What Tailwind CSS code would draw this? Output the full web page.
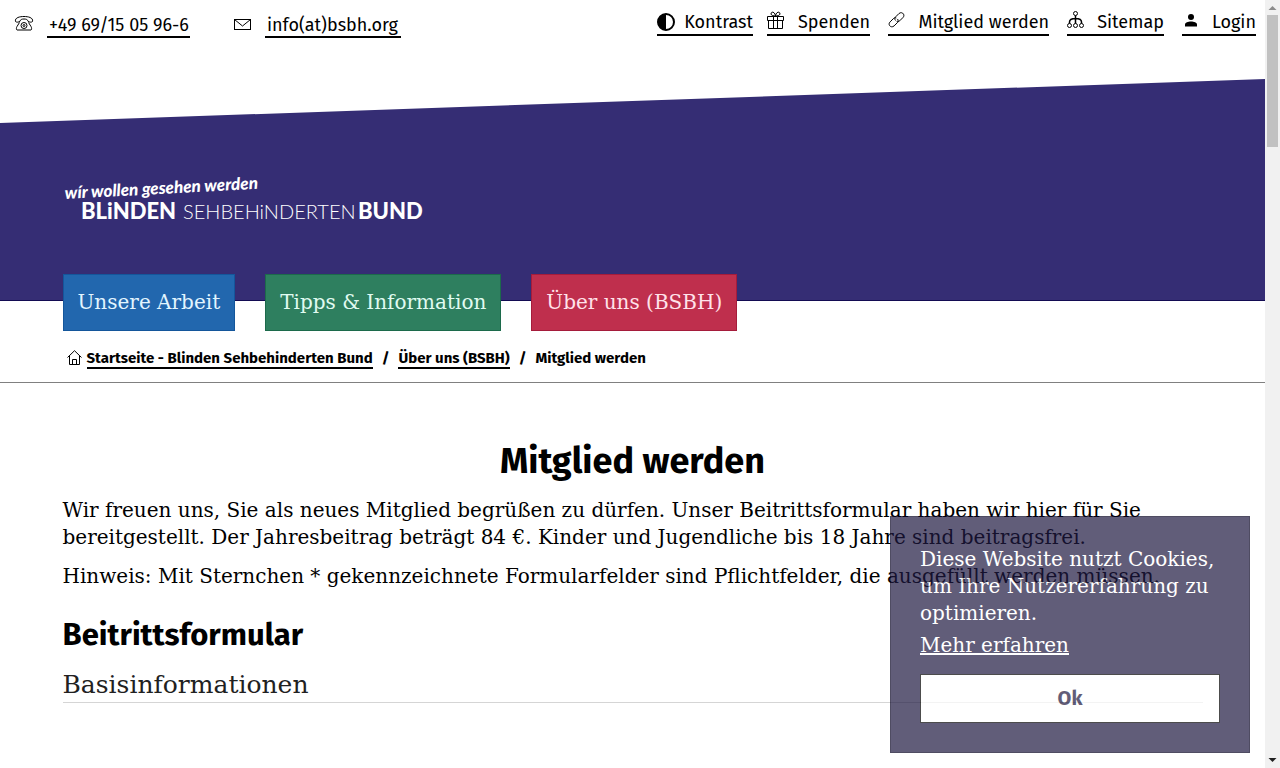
<!DOCTYPE html>
<html lang="de">

<head>
  <meta charset="UTF-8" />
  <meta name="viewport" content="width=device-width, initial-scale=1.0" />
  <title>Mitglied werden - Blinden Sehbehinderten Bund</title>
  <script src="https://cdn.jsdelivr.net/npm/@tailwindcss/browser@4"></script>
</head>

<body class="h-screen overflow-hidden bg-white text-black font-['DejaVu_Serif',serif] text-[20px] leading-[27px]">
  <div class="pr-[15px]">

    <!-- Top bar -->
    <div class="h-[79px] flex justify-between items-start pl-[14px] pr-[9px] font-['Fira_Sans','Noto_Sans',sans-serif] text-[18px] leading-[24px]">
      <address class="not-italic flex pt-[14px] gap-[42px] leading-[22px]">
        <div class="flex gap-[13px]">
          <svg class="w-5 h-5" viewBox="0 0 20 20" fill="none" stroke="#000">
            <path d="M1.500 7.500C.5 3.500 6 2.500 10 2.500s9.500 1 8.500 5c-1 1-3.500.8-4.500-.2C13.800 5.500 12 5 10 5S6.200 5.500 6 7.300C5 8.300 2.500 8.500 1.500 7.500z" />
            <path d="M5.500 8.500 3 12.500c-.8 1-.8 3.500 0 3.500h14c.8 0 .8-2.500 0-3.500l-2.500-4" />
            <circle cx="10" cy="11.500" r="3" />
            <circle cx="10" cy="11.500" r="1" />
          </svg>
          <a href="tel:+49691505966" class="min-w-[143px] border-b-2 border-black pl-[2px]">+49 69/15 05 96-6</a>
        </div>
        <div class="flex gap-[13px]">
          <svg class="w-5 h-5" viewBox="0 0 20 20" fill="none" stroke="#000">
            <rect x="2.500" y="5.500" width="16" height="10" />
            <path d="m2.500 5.500 8 6.500 8-6.500" />
          </svg>
          <a href="mailto:info@bsbh.org" class="min-w-[136px] border-b-2 border-black pl-[2px]">info(at)bsbh.org</a>
        </div>
      </address>

      <nav class="flex gap-[18px] pt-[10px]">
        <div class="flex gap-[14px]">
          <a href="#" class="min-w-[96px] flex justify-between border-b-2 border-black">
            <svg class="w-[18px] h-[18px] mt-[3px]" viewBox="0 0 18 18">
              <circle cx="9" cy="9" r="8" fill="#fff" stroke="#000" stroke-width="2" />
              <path d="M9 1a8 8 0 0 0 0 16z" />
            </svg>
            Kontrast
          </a>
          <a href="#" class="min-w-[103px] flex justify-between border-b-2 border-black">
            <svg class="w-[18px] h-[18px] mt-[1px]" viewBox="0 0 18 18" fill="none" stroke="#000">
              <path d="M.5 5.500h16v4H.5zM1.500 9.500h14v8h-14zM6.500 5.500v12M10.500 5.500v12M8.500 5C7 5 4 4.500 4 3c0-3 4-2.500 4.500 2C9 .5 13 0 13 3c0 1.500-3 2-4.500 2z" />
            </svg>
            Spenden
          </a>
        </div>
        <a href="#" class="min-w-[161px] flex justify-between border-b-2 border-black">
          <svg class="w-[18px] h-[18px] mt-[1px]" viewBox="0 0 18 18" fill="none" stroke="#000">
            <path d="M7.500 9.500c-1-1.200-.8-2.700.2-3.700l3.200-3.200c3-2.700 6.800 1.200 4 4L11.700 9.800c-.9.900-2 1.200-3 .7M9.500 8c1 1.200.8 2.700-.2 3.700l-3.200 3.200c-3 2.700-6.800-1.200-4-4l3.200-3.200c.9-.9 2-1.200 3-.7" />
          </svg>
          Mitglied werden
        </a>
        <a href="#" class="min-w-[97px] flex justify-between border-b-2 border-black">
          <svg class="w-[18px] h-[18px] mt-[1px]" viewBox="0 0 18 18" fill="none" stroke="#000">
            <circle cx="8.500" cy="2.500" r="2" />
            <circle cx="2.500" cy="14.500" r="2" />
            <circle cx="8.500" cy="14.500" r="2" />
            <circle cx="14.500" cy="14.500" r="2" />
            <path stroke-width="1.500" d="M8.500 4.500v8M2.500 12.500V11c0-2 2.500-3.500 6-3.500s6 1.500 6 3.500v1.500" />
          </svg>
          Sitemap
        </a>
        <a href="#" class="min-w-[74px] flex justify-between border-b-2 border-black">
          <svg class="w-[18px] h-[18px] mt-[1px]" viewBox="0 0 18 18">
            <circle cx="9" cy="6" r="3" />
            <path d="M3 15.500v-2c0-2 3-3 6-3s6 1 6 3v2z" />
          </svg>
          Login
        </a>
      </nav>
    </div>

    <!-- Slanted banner -->
    <header class="h-[222px] bg-[#352d74] border-b border-[#130b52] pt-[93px] [clip-path:polygon(0_44px,100%_0,100%_100%,0_100%)]">
      <div class="max-w-[1140px] mx-auto">
        <a href="#" class="block w-[364px]" aria-label="Blinden Sehbehinderten Bund">
          <svg class="w-[364px] h-[52px]" viewBox="0 0 364 52" fill="#fff">
            <text x="2" y="27" transform="rotate(-3 2 27)" font-family="Lato, sans-serif" font-size="17" font-weight="900" font-style="italic">wír wollen gesehen werden</text>
            <text x="18" y="47" font-family="Lato, sans-serif" font-size="22" font-weight="900">BLiNDEN</text>
            <text x="120" y="47" font-family="Lato, sans-serif" font-size="20" font-weight="300">SEHBEHiNDERTEN</text>
            <text x="295" y="47" font-family="Lato, sans-serif" font-size="22" font-weight="900">BUND</text>
          </svg>
        </a>
      </div>
    </header>

    <!-- Main navigation -->
    <nav class="relative max-w-[1140px] mx-auto -mt-[27px] flex gap-[30px]">
      <a href="#" class="bg-[#2267ae] border border-[#14569b] px-[14px] py-[14px] text-[#e2f5ff]">Unsere Arbeit</a>
      <a href="#" class="bg-[#2e7f5f] border border-[#1c6a4b] px-[14px] py-[14px] text-[#e0fbf1]">Tipps &amp; Information</a>
      <a href="#" class="bg-[#bf2f4d] border border-[#a51c3b] px-[14px] py-[14px] text-[#ffe2ea]">Über uns (BSBH)</a>
    </nav>

    <!-- Breadcrumb -->
    <div class="border-b border-[#808080] pt-[19px] pb-[13px]">
      <ol class="max-w-[1140px] mx-auto pl-1 flex font-['Fira_Sans','Noto_Sans',sans-serif] font-bold text-[15px] leading-[17px]">
        <li class="flex gap-[5px]">
          <svg class="w-[15px] h-[15px]" viewBox="0 0 15 15" fill="none" stroke="#000">
            <path d="M.5 7.500 7.500.7l7 6.800M2.500 6v8.500h10V6M5.500 14.500v-5h4v5" />
          </svg>
          <a href="#" class="border-b-2 border-black">Startseite - Blinden Sehbehinderten Bund</a>
        </li>
        <li class="px-[9px]">/</li>
        <li><a href="#" class="block border-b-2 border-black">Über uns (BSBH)</a></li>
        <li class="px-[9px]">/</li>
        <li>Mitglied werden</li>
      </ol>
    </div>

    <!-- Content -->
    <main class="max-w-[1140px] mx-auto pt-[54px]">
      <h1 class="mb-[12px] text-center font-['Fira_Sans','Noto_Sans',sans-serif] font-bold text-[36px] leading-[48px]">Mitglied werden</h1>
      <p class="mb-[12px]">Wir freuen uns, Sie als neues Mitglied begrüßen zu dürfen. Unser Beitrittsformular haben wir hier für Sie bereitgestellt. Der Jahresbeitrag beträgt 84 €. Kinder und Jugendliche bis 18 Jahre sind beitragsfrei.</p>
      <p class="mb-[25px]">Hinweis: Mit Sternchen * gekennzeichnete Formularfelder sind Pflichtfelder, die ausgefüllt werden müssen.</p>
      <h2 class="mb-[12px] font-['Fira_Sans','Noto_Sans',sans-serif] font-bold text-[31px] leading-[40px]">Beitrittsformular</h2>
      <form>
        <fieldset>
          <legend class="w-full border-b border-[#d5d5d5] text-[25px] leading-[35px] text-[#212121]">Basisinformationen</legend>
        </fieldset>
      </form>
    </main>
  </div>

  <!-- Cookie notice -->
  <div class="fixed right-[30px] bottom-[15px] w-[360px] bg-[#1f1940] border border-[#050020] opacity-70 text-white px-[29px] pt-[29px] pb-[29px]">
    <p class="mb-[5px]">Diese Website nutzt Cookies, um Ihre Nutzererfahrung zu optimieren.</p>
    <a href="#" class="underline">Mehr erfahren</a>
    <button type="button" class="block mt-[15px] w-full h-[49px] bg-white border border-black font-['Fira_Sans','Noto_Sans',sans-serif] font-bold text-[#1f1940]">Ok</button>
  </div>

  <!-- Scrollbar -->
  <div class="fixed right-0 inset-y-0 w-[15px] bg-[#f1f1f1] flex flex-col items-center justify-between">
    <div class="flex flex-col items-center">
      <svg class="w-[15px] h-[15px]" viewBox="0 0 15 15" fill="#8b8b8b"><path d="m3.500 10 4-4 4 4z" /></svg>
      <div class="w-[11px] h-[132px] bg-[#c1c1c1]"></div>
    </div>
    <svg class="w-[15px] h-[15px]" viewBox="0 0 15 15" fill="#202020"><path d="m3.500 5 4 4 4-4z" /></svg>
  </div>
</body>

</html>
